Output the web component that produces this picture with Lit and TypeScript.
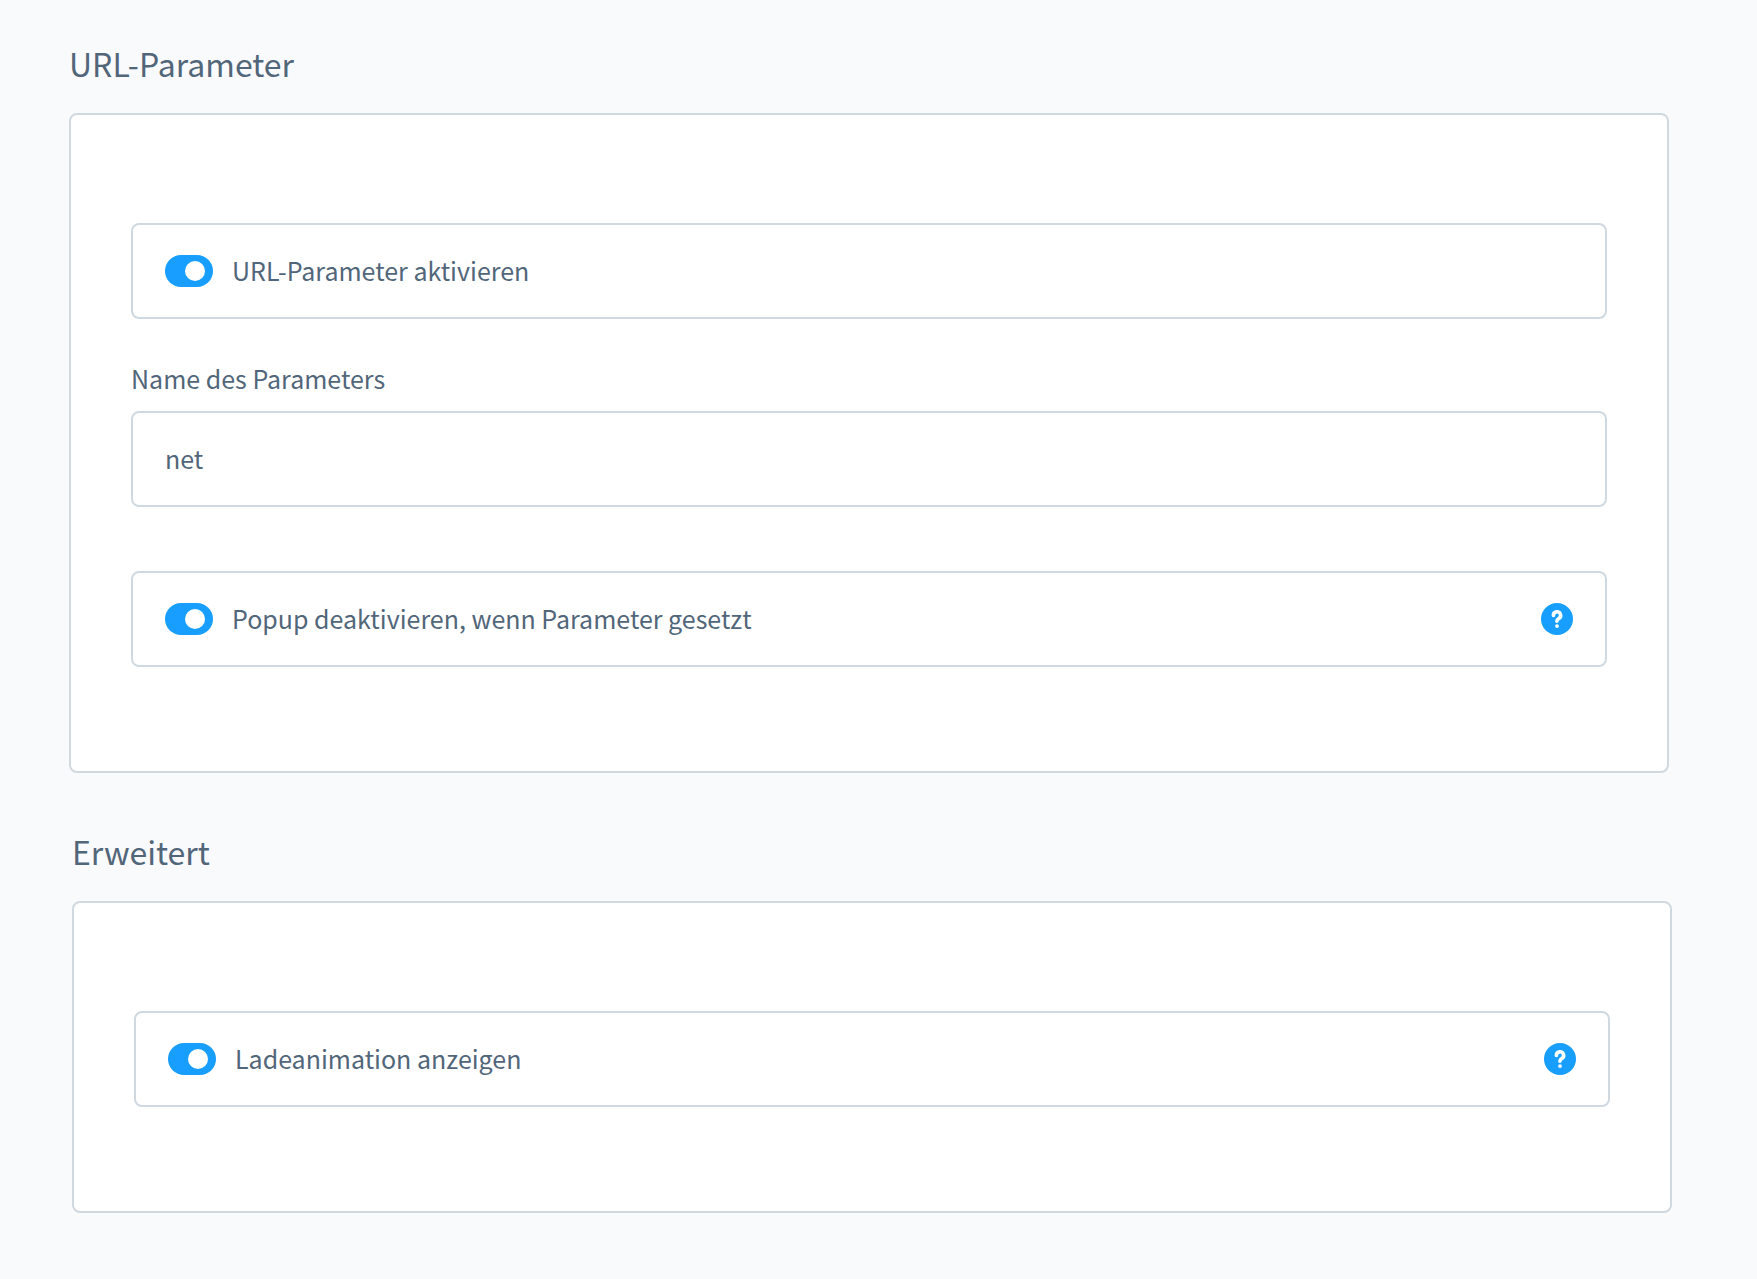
import { LitElement, html, css, nothing } from "lit";
import { customElement, property, state } from "lit/decorators.js";

/** Bordered row holding a switch, its label and an optional help button. */
@customElement("switch-field")
class SwitchField extends LitElement {
  @property() label = "";
  @property({ type: Boolean }) checked = false;
  @property({ type: Boolean }) help = false;

  static styles = css`
    :host {
      display: block;
    }
    .field {
      box-sizing: border-box;
      display: flex;
      align-items: center;
      min-height: 96px;
      padding: 0 32px;
      border: 2px solid #d1d9e0;
      border-radius: 8px;
      background: #fff;
    }
    .switch {
      appearance: none;
      box-sizing: border-box;
      display: flex;
      flex: none;
      align-items: center;
      width: 48px;
      height: 32px;
      margin: 0;
      padding: 0 8px;
      border-radius: 16px;
      background: #d1d9e0;
      cursor: pointer;
    }
    .switch::before {
      content: "";
      width: 20px;
      height: 20px;
      border-radius: 50%;
      background: #fff;
    }
    .switch:checked {
      justify-content: flex-end;
      background: #189eff;
    }
    .label {
      flex: 1;
      padding: 0 0 2px 19px;
      line-height: 38px;
      cursor: pointer;
    }
    .help {
      flex: none;
      width: 32px;
      height: 32px;
      padding: 0;
      border: 0;
      border-radius: 50%;
      background: none;
      cursor: pointer;
    }
    .icon {
      display: block;
      width: 32px;
      height: 32px;
    }
  `;

  private toggle(e: Event) {
    this.checked = (e.target as HTMLInputElement).checked;
  }

  render() {
    return html`
      <div class="field">
        <input
          class="switch"
          id="switch"
          type="checkbox"
          .checked=${this.checked}
          @change=${this.toggle}
        />
        <label class="label" for="switch">${this.label}</label>
        ${this.help
          ? html`<button class="help" type="button" aria-label="Hilfe">
              <svg class="icon" viewBox="0 0 32 32" aria-hidden="true">
                <circle cx="16" cy="16" r="16" fill="#189eff" />
                <path
                  d="M12.4 12.5A3.6 3.6 0 1 1 17.7 15.6Q15.9 16.6 15.9 18.3"
                  fill="none"
                  stroke="#fff"
                  stroke-width="3.6"
                  stroke-linecap="round"
                />
                <circle cx="16" cy="23.1" r="1.9" fill="#fff" />
              </svg>
            </button>`
          : nothing}
      </div>
    `;
  }
}

@customElement("app-root")
class AppRoot extends LitElement {
  @state() private parameterName = "net";

  static styles = css`
    :host {
      display: block;
      box-sizing: border-box;
      min-height: 100vh;
      padding: 39px 88px 64px 69px;
      background: #f9fafb;
      color: #52667a;
      font-family: "Noto Sans CJK SC", "Noto Sans", sans-serif;
      font-size: 25px;
    }
    .advanced {
      margin: 54px -3px 0 3px;
    }
    .title {
      margin: 0 0 26px;
      font-size: 32px;
      font-weight: 400;
      line-height: 48px;
    }
    .card {
      padding: 108px 60px 104px;
      border: 2px solid #d1d9e0;
      border-radius: 8px;
      background: #fff;
    }
    .text-field {
      display: flex;
      flex-direction: column;
      gap: 14px;
      margin: 40px 0 64px;
    }
    .caption {
      line-height: 38px;
    }
    .input {
      box-sizing: border-box;
      width: 100%;
      height: 96px;
      margin: 0;
      padding: 0 32px 2px;
      border: 2px solid #d1d9e0;
      border-radius: 8px;
      background: #fff;
      color: inherit;
      font: inherit;
    }
    .input:focus {
      outline: none;
      border-color: #189eff;
    }
  `;

  render() {
    return html`
      <section>
        <h2 class="title">URL-Parameter</h2>
        <div class="card">
          <switch-field label="URL-Parameter aktivieren" checked></switch-field>
          <div class="text-field">
            <label class="caption" for="name">Name des Parameters</label>
            <input
              class="input"
              id="name"
              type="text"
              .value=${this.parameterName}
              @input=${(e: Event) => {
                this.parameterName = (e.target as HTMLInputElement).value;
              }}
            />
          </div>
          <switch-field
            label="Popup deaktivieren, wenn Parameter gesetzt"
            checked
            help
          ></switch-field>
        </div>
      </section>
      <section class="advanced">
        <h2 class="title">Erweitert</h2>
        <div class="card">
          <switch-field label="Ladeanimation anzeigen" checked help></switch-field>
        </div>
      </section>
    `;
  }
}
